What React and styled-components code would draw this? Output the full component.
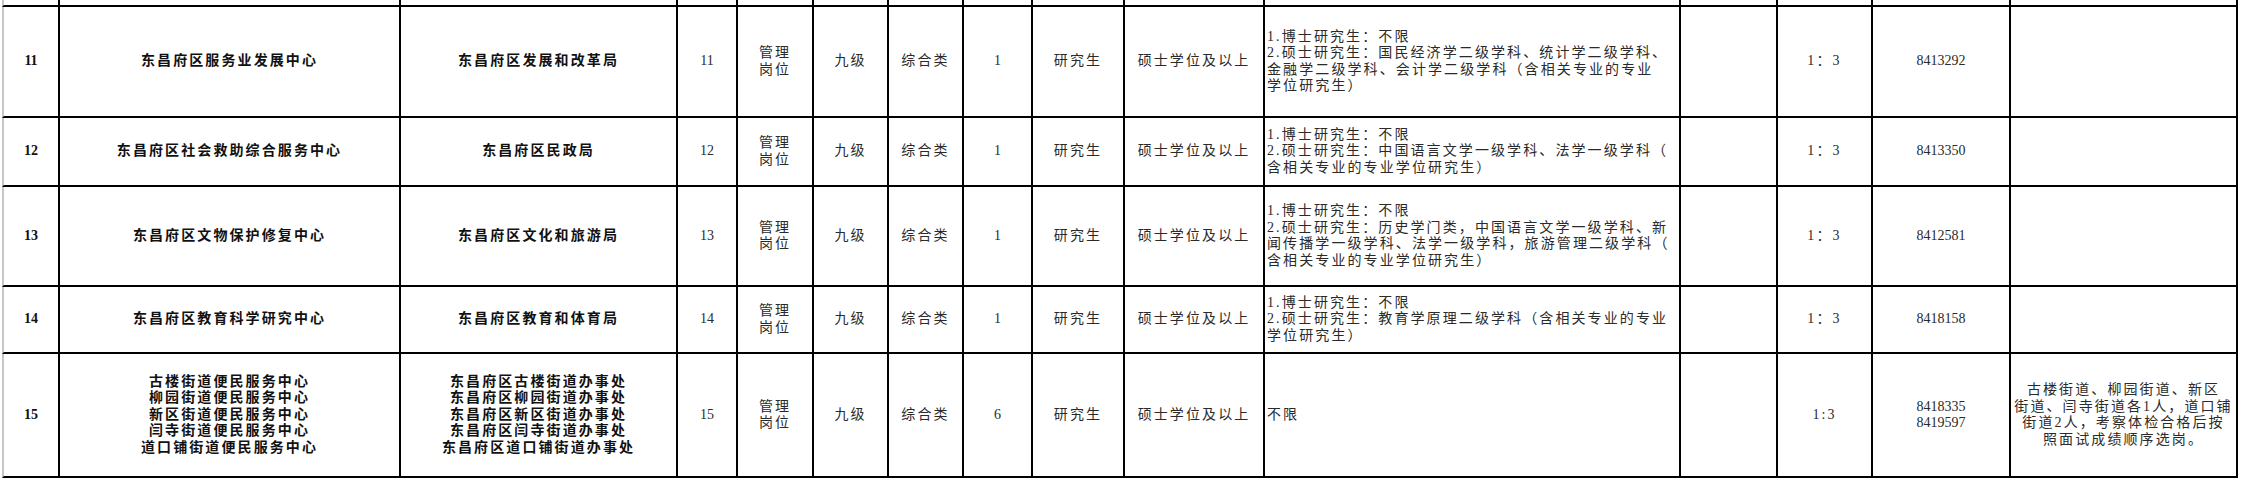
import React from 'react'
import styled, { createGlobalStyle } from 'styled-components'

const GlobalStyle = createGlobalStyle`
  html, body {
    margin: 0;
    padding: 0;
    background: #fff;
  }
`

// column widths, right border included (first one also holds the grey left edge)
const COLS = [58, 341, 277, 60, 76, 75, 75, 69, 92, 140, 416, 97, 95, 138, 227]

const Sheet = styled.div`
  padding-left: 2px;
  width: 2247px;
  font-family: "Liberation Serif", "Noto Sans CJK SC", serif;
  font-size: 14px;
  color: #222;
`

const Row = styled.div`
  display: grid;
  grid-template-columns: ${COLS.map(w => w + 'px').join(' ')};
  height: ${props => props.$h}px;
`

const Cell = styled.div`
  box-sizing: border-box;
  display: flex;
  align-items: center;
  justify-content: ${props => (props.$left ? 'flex-start' : 'center')};
  text-align: ${props => (props.$left ? 'left' : 'center')};
  padding-left: ${props => (props.$left ? '2px' : '0')};
  border-right: 2px solid #000;
  border-bottom: 2px solid #000;
  overflow: hidden;
  white-space: nowrap;
  line-height: 16.5px;
  letter-spacing: ${props => (props.$num ? '0' : '2.1px')};
  font-weight: ${props => (props.$bold ? 700 : 400)};
  color: ${props => (props.$bold ? '#111' : '#2a2a2a')};

  &:first-child {
    border-left: 2px solid #c6c6c6;
  }
`

const Lines = styled.div`
  display: flex;
  flex-direction: column;
`

const Multi = ({ lines }) => (
  <Lines>
    {lines.map((l, i) => <span key={i}>{l}</span>)}
  </Lines>
)

const rows = [
  {
    h: 111,
    no: '11',
    unit: ['东昌府区服务业发展中心'],
    dept: ['东昌府区发展和改革局'],
    count: '1',
    req: [
      '1.博士研究生：不限',
      '2.硕士研究生：国民经济学二级学科、统计学二级学科、',
      '金融学二级学科、会计学二级学科（含相关专业的专业',
      '学位研究生）',
    ],
    ratio: '1：3',
    phone: ['8413292'],
    note: [],
  },
  {
    h: 69,
    no: '12',
    unit: ['东昌府区社会救助综合服务中心'],
    dept: ['东昌府区民政局'],
    count: '1',
    req: [
      '1.博士研究生：不限',
      '2.硕士研究生：中国语言文学一级学科、法学一级学科（',
      '含相关专业的专业学位研究生）',
    ],
    ratio: '1：3',
    phone: ['8413350'],
    note: [],
  },
  {
    h: 100,
    no: '13',
    unit: ['东昌府区文物保护修复中心'],
    dept: ['东昌府区文化和旅游局'],
    count: '1',
    req: [
      '1.博士研究生：不限',
      '2.硕士研究生：历史学门类，中国语言文学一级学科、新',
      '闻传播学一级学科、法学一级学科，旅游管理二级学科（',
      '含相关专业的专业学位研究生）',
    ],
    ratio: '1：3',
    phone: ['8412581'],
    note: [],
  },
  {
    h: 67,
    no: '14',
    unit: ['东昌府区教育科学研究中心'],
    dept: ['东昌府区教育和体育局'],
    count: '1',
    req: [
      '1.博士研究生：不限',
      '2.硕士研究生：教育学原理二级学科（含相关专业的专业',
      '学位研究生）',
    ],
    ratio: '1：3',
    phone: ['8418158'],
    note: [],
  },
  {
    h: 124,
    no: '15',
    unit: [
      '古楼街道便民服务中心',
      '柳园街道便民服务中心',
      '新区街道便民服务中心',
      '闫寺街道便民服务中心',
      '道口铺街道便民服务中心',
    ],
    dept: [
      '东昌府区古楼街道办事处',
      '东昌府区柳园街道办事处',
      '东昌府区新区街道办事处',
      '东昌府区闫寺街道办事处',
      '东昌府区道口铺街道办事处',
    ],
    count: '6',
    req: ['不限'],
    ratio: '1:3',
    phone: ['8418335', '8419597'],
    note: [
      '古楼街道、柳园街道、新区',
      '街道、闫寺街道各1人，道口铺',
      '街道2人，考察体检合格后按',
      '照面试成绩顺序选岗。',
    ],
  },
]

export default function App() {
  return (
    <>
      <GlobalStyle />
      <Sheet>
        <Row $h={7}>
          {COLS.map((_, i) => <Cell key={i} />)}
        </Row>
        {rows.map(r => (
          <Row key={r.no} $h={r.h}>
            <Cell $num $bold>{r.no}</Cell>
            <Cell $bold><Multi lines={r.unit} /></Cell>
            <Cell $bold><Multi lines={r.dept} /></Cell>
            <Cell $num>{r.no}</Cell>
            <Cell><Multi lines={['管理', '岗位']} /></Cell>
            <Cell>九级</Cell>
            <Cell>综合类</Cell>
            <Cell $num>{r.count}</Cell>
            <Cell>研究生</Cell>
            <Cell>硕士学位及以上</Cell>
            <Cell $left><Multi lines={r.req} /></Cell>
            <Cell />
            <Cell>{r.ratio}</Cell>
            <Cell $num><Multi lines={r.phone} /></Cell>
            <Cell>{r.note.length > 0 && <Multi lines={r.note} />}</Cell>
          </Row>
        ))}
      </Sheet>
    </>
  )
}
